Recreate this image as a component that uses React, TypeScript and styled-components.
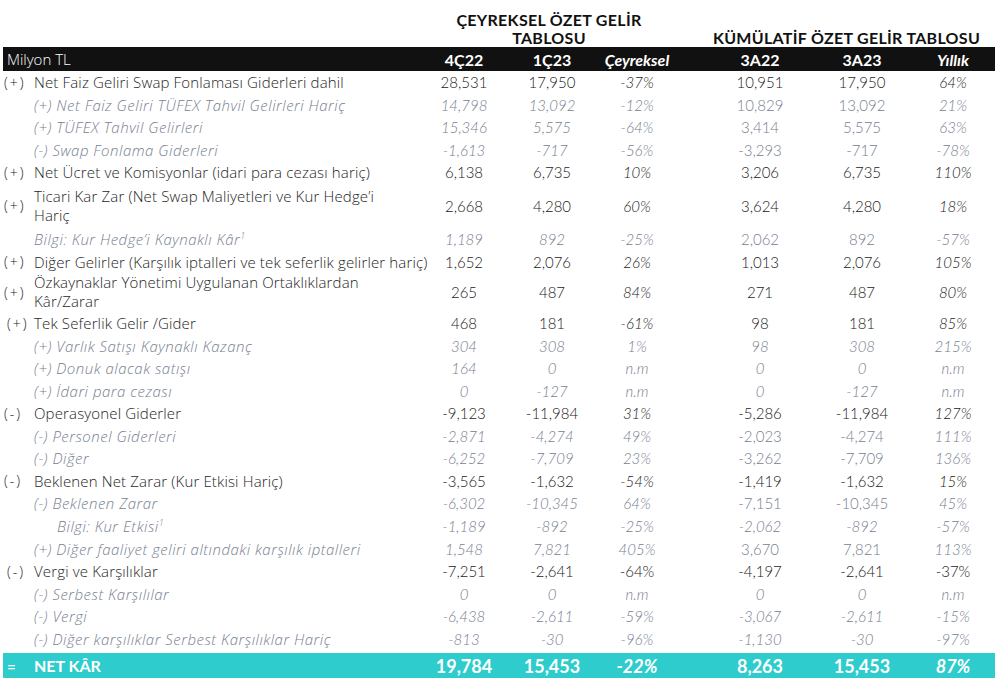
import React from "react";
import styled, { createGlobalStyle } from "styled-components";

const GlobalStyle = createGlobalStyle`
  html, body { margin: 0; padding: 0; background: #ffffff; }
  body { font-family: Lato, "Liberation Sans", sans-serif; color: #222; }
`;

const COLS = "31px 386px 88px 88px 82px 30px 104px 100px 73px";
const LABEL_FONT = `"Open Sans", Lato, sans-serif`;

const Page = styled.div`
  width: 992px;
  padding: 9px 0 0 3px;
  display: flex;
  flex-direction: column;
`;

const TitleRow = styled.div`
  display: grid;
  grid-template-columns: ${COLS};
  align-items: end;
  height: 38px;
`;

const Title = styled.div<{ $from: number; $to: number; $max: number }>`
  grid-column: ${(p) => p.$from} / ${(p) => p.$to};
  justify-self: center;
  text-align: center;
  font-weight: 700;
  font-size: 16px;
  letter-spacing: 0.3px;
  line-height: 18px;
  color: #111;
  max-width: ${(p) => p.$max}px;
`;

const HeaderBar = styled.div`
  display: grid;
  grid-template-columns: ${COLS};
  align-items: center;
  height: 24px;
  background: #111111;
  color: #ffffff;
`;

const HeadLabel = styled.div`
  grid-column: 1 / 3;
  padding-left: 4px;
  font-family: ${LABEL_FONT};
  font-size: 15px;
  font-weight: 300;
`;

const HeadCell = styled.div<{ $italic?: boolean; $pad?: boolean }>`
  text-align: center;
  font-size: 16px;
  font-weight: 700;
  font-style: ${(p) => (p.$italic ? "italic" : "normal")};
  padding-left: ${(p) => (p.$pad ? "9px" : "0")};
`;

const Row = styled.div<{ $h: number }>`
  display: grid;
  grid-template-columns: ${COLS};
  align-items: center;
  height: ${(p) => p.$h}px;
`;

const Sign = styled.div<{ $shift?: number }>`
  font-family: ${LABEL_FONT};
  font-size: 14px;
  font-weight: 300;
  letter-spacing: 2px;
  padding-left: ${(p) => 1 + (p.$shift || 0)}px;
  color: #222;
  white-space: nowrap;
`;

const Label = styled.div<{ $sub?: boolean; $indent?: number }>`
  font-family: ${LABEL_FONT};
  font-size: 15px;
  line-height: 18px;
  letter-spacing: ${(p) => (p.$sub ? "0.5px" : "0.15px")};
  padding-left: ${(p) => p.$indent || 0}px;
  color: ${(p) => (p.$sub ? "#778091" : "#1e1e1e")};
  font-style: ${(p) => (p.$sub ? "italic" : "normal")};
  font-weight: 300;
  white-space: nowrap;
  sup { font-size: 9px; line-height: 0; vertical-align: 6px; }
`;

const LabelLine = styled.span`
  display: block;
  line-height: 19px;
`;

const Cell = styled.div<{ $sub?: boolean; $italic?: boolean; $pad?: boolean }>`
  text-align: center;
  font-size: 15px;
  font-weight: 300;
  color: ${(p) => (p.$sub ? "#778091" : "#1a1a1a")};
  font-style: ${(p) => (p.$italic ? "italic" : "normal")};
  padding-left: ${(p) => (p.$pad ? "9px" : "0")};
`;

const Gap = styled.div``;

const TotalBar = styled.div`
  display: grid;
  grid-template-columns: ${COLS};
  align-items: center;
  height: 25px;
  margin-top: 3px;
  background: #2ecccc;
  color: #ffffff;
`;

const TotalSign = styled.div`
  font-size: 15px;
  font-weight: 700;
  padding-left: 4px;
`;

const TotalLabel = styled.div`
  font-size: 16px;
  font-weight: 700;
`;

const TotalCell = styled.div<{ $italic?: boolean; $pad?: boolean }>`
  text-align: center;
  font-size: 18px;
  font-weight: 700;
  font-style: ${(p) => (p.$italic ? "italic" : "normal")};
  padding-left: ${(p) => (p.$pad ? "9px" : "0")};
`;

type RowData = {
  sign?: string;
  signShift?: number;
  label: React.ReactNode;
  sub?: boolean;
  indent?: number;
  h?: number;
  v: string[];
  cumItalic?: boolean;
  pctUpright?: boolean;
};

const rows: RowData[] = [
  { sign: "(+)", label: "Net Faiz Geliri Swap Fonlaması Giderleri dahil", v: ["28,531", "17,950", "-37%", "10,951", "17,950", "64%"] },
  { label: "(+) Net Faiz Geliri TÜFEX Tahvil Gelirleri Hariç", sub: true, v: ["14,798", "13,092", "-12%", "10,829", "13,092", "21%"] },
  { label: "(+) TÜFEX Tahvil Gelirleri", sub: true, v: ["15,346", "5,575", "-64%", "3,414", "5,575", "63%"] },
  { label: "(-) Swap Fonlama Giderleri", sub: true, v: ["-1,613", "-717", "-56%", "-3,293", "-717", "-78%"] },
  { sign: "(+)", label: "Net Ücret ve Komisyonlar (idari para cezası hariç)", v: ["6,138", "6,735", "10%", "3,206", "6,735", "110%"] },
  { sign: "(+)", label: <><LabelLine>Ticari Kar Zar (Net Swap Maliyetleri ve Kur Hedge’i</LabelLine><LabelLine>Hariç</LabelLine></>, h: 44, v: ["2,668", "4,280", "60%", "3,624", "4,280", "18%"] },
  { label: <>Bilgi: Kur Hedge’i Kaynaklı Kâr<sup>1</sup></>, sub: true, v: ["1,189", "892", "-25%", "2,062", "892", "-57%"] },
  { sign: "(+)", label: "Diğer Gelirler (Karşılık iptalleri ve tek seferlik gelirler hariç)", v: ["1,652", "2,076", "26%", "1,013", "2,076", "105%"] },
  { sign: "(+)", label: <><LabelLine>Özkaynaklar Yönetimi Uygulanan Ortaklıklardan</LabelLine><LabelLine>Kâr/Zarar</LabelLine></>, h: 39, v: ["265", "487", "84%", "271", "487", "80%"] },
  { sign: "(+)", signShift: 3, label: "Tek Seferlik Gelir /Gider", v: ["468", "181", "-61%", "98", "181", "85%"] },
  { label: "(+) Varlık Satışı Kaynaklı Kazanç", sub: true, cumItalic: true, v: ["304", "308", "1%", "98", "308", "215%"] },
  { label: "(+) Donuk alacak satışı", sub: true, cumItalic: true, v: ["164", "0", "n.m", "0", "0", "n.m"] },
  { label: "(+) İdari para cezası", sub: true, cumItalic: true, v: ["0", "-127", "n.m", "0", "-127", "n.m"] },
  { sign: "(-)", label: "Operasyonel Giderler", v: ["-9,123", "-11,984", "31%", "-5,286", "-11,984", "127%"] },
  { label: "(-) Personel Giderleri", sub: true, v: ["-2,871", "-4,274", "49%", "-2,023", "-4,274", "111%"] },
  { label: "(-) Diğer", sub: true, v: ["-6,252", "-7,709", "23%", "-3,262", "-7,709", "136%"] },
  { sign: "(-)", label: "Beklenen Net Zarar (Kur Etkisi Hariç)", v: ["-3,565", "-1,632", "-54%", "-1,419", "-1,632", "15%"] },
  { label: "(-) Beklenen Zarar", sub: true, v: ["-6,302", "-10,345", "64%", "-7,151", "-10,345", "45%"] },
  { label: <>Bilgi: Kur Etkisi<sup>1</sup></>, sub: true, indent: 23, cumItalic: true, v: ["-1,189", "-892", "-25%", "-2,062", "-892", "-57%"] },
  { label: "(+) Diğer faaliyet geliri altındaki karşılık iptalleri", sub: true, v: ["1,548", "7,821", "405%", "3,670", "7,821", "113%"] },
  { sign: "(-)", signShift: 3, label: "Vergi ve Karşılıklar", pctUpright: true, v: ["-7,251", "-2,641", "-64%", "-4,197", "-2,641", "-37%"] },
  { label: "(-) Serbest Karşılılar", sub: true, cumItalic: true, v: ["0", "0", "n.m", "0", "0", "n.m"] },
  { label: "(-) Vergi", sub: true, cumItalic: true, v: ["-6,438", "-2,611", "-59%", "-3,067", "-2,611", "-15%"] },
  { label: "(-) Diğer karşılıklar Serbest Karşılıklar Hariç", sub: true, cumItalic: true, v: ["-813", "-30", "-96%", "-1,130", "-30", "-97%"] },
];

const totals = ["19,784", "15,453", "-22%", "8,263", "15,453", "87%"];

function italicFor(r: RowData, i: number): boolean {
  const pct = i === 2 || i === 5;
  if (pct) return !r.pctUpright;
  if (r.sub) {
    if (i <= 1) return true;
    return !!r.cumItalic;
  }
  return false;
}

export default function App() {
  return (
    <>
      <GlobalStyle />
      <Page>
        <TitleRow>
          <Title $from={3} $to={6} $max={240}>ÇEYREKSEL ÖZET GELİR TABLOSU</Title>
          <Title $from={7} $to={10} $max={320}>KÜMÜLATİF ÖZET GELİR TABLOSU</Title>
        </TitleRow>
        <HeaderBar>
          <HeadLabel>Milyon TL</HeadLabel>
          <HeadCell>4Ç22</HeadCell>
          <HeadCell>1Ç23</HeadCell>
          <HeadCell $italic>Çeyreksel</HeadCell>
          <Gap />
          <HeadCell>3A22</HeadCell>
          <HeadCell>3A23</HeadCell>
          <HeadCell $italic $pad>Yıllık</HeadCell>
        </HeaderBar>
        {rows.map((r, idx) => (
          <Row key={idx} $h={r.h || 22.55}>
            <Sign $shift={r.signShift}>{r.sign || ""}</Sign>
            <Label $sub={r.sub} $indent={r.indent}>{r.label}</Label>
            {r.v.slice(0, 3).map((val, i) => (
              <Cell key={i} $sub={r.sub} $italic={italicFor(r, i)}>{val}</Cell>
            ))}
            <Gap />
            {r.v.slice(3).map((val, j) => (
              <Cell key={j} $sub={r.sub} $italic={italicFor(r, j + 3)} $pad={j === 2}>{val}</Cell>
            ))}
          </Row>
        ))}
        <TotalBar>
          <TotalSign>=</TotalSign>
          <TotalLabel>NET KÂR</TotalLabel>
          {totals.slice(0, 3).map((t, i) => (
            <TotalCell key={i} $italic={i === 2}>{t}</TotalCell>
          ))}
          <Gap />
          {totals.slice(3).map((t, j) => (
            <TotalCell key={j} $italic={j === 2} $pad={j === 2}>{t}</TotalCell>
          ))}
        </TotalBar>
      </Page>
    </>
  );
}
